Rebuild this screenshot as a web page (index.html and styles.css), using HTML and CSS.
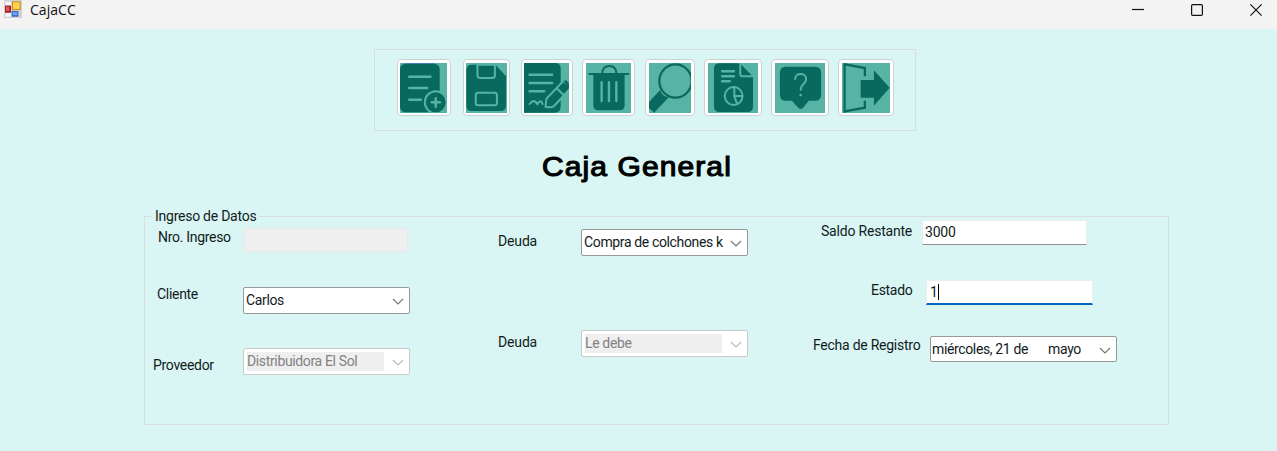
FILE: index.html
```html
<!DOCTYPE html>
<html lang="es">
<head>
<meta charset="utf-8">
<title>CajaCC</title>
<link rel="stylesheet" href="styles.css">
</head>
<body>
<header class="titlebar">
  <svg class="app-icon" viewBox="0 0 54 54">
    <rect width="54" height="54" fill="#d2d2d2"/>
    <path d="M4 5h17v10H4zM4 39h17v11H4z" fill="#f5f5f5"/>
    <rect x="24" y="4" width="26" height="26" fill="#c98b12"/><rect x="27" y="7" width="20" height="20" fill="#ffd34d"/>
    <rect x="3" y="17" width="18" height="21" fill="#a51c20"/><rect x="6" y="20" width="10" height="13" fill="#e0585a"/>
    <rect x="23" y="33" width="20" height="17" fill="#2b62c4"/><rect x="26" y="36" width="14" height="10" fill="#6ea5f7"/>
  </svg>
  <span class="app-name">CajaCC</span>
  <div class="window-controls">
    <svg viewBox="0 0 12 12"><path d="M0 5.5h12"/></svg>
    <svg viewBox="0 0 12 12"><rect x=".6" y=".6" width="10.8" height="10.8" rx="1.2"/></svg>
    <svg viewBox="0 0 12 12"><path d="M.4.4l11.2 11.2M11.6.4L.4 11.6"/></svg>
  </div>
</header>
<main class="form">
  <nav class="toolbar">
    <button class="tool tool-new" aria-label="Nuevo"><svg viewBox="0 0 142 150" preserveAspectRatio="none">
      <rect x="0" y="2" width="120" height="146" rx="16" class="solid"/><path d="M14 1h90" stroke="#3f78c8" stroke-width="3"/>
      <path d="M28 41h64M28 75h54M28 110h35" class="line"/>
      <circle cx="108" cy="118" r="33" class="solid"/><circle cx="108" cy="118" r="33" class="line thin"/><path d="M108 106v25M96 118h25" class="line"/>
    </svg></button>
    <button class="tool tool-save" aria-label="Guardar"><svg viewBox="0 0 122 150" preserveAspectRatio="none">
      <path d="M18 5h70l31 35v88q0 16-16 16H16q-15 0-15-16V22Q1 5 18 5z" class="solid"/>
      <path d="M34 5v32q0 8 8 8h36q8 0 8-8V5z" class="line thin"/><rect x="29" y="89" width="63" height="38" rx="7" class="line thin"/>
    </svg></button>
    <button class="tool tool-edit" aria-label="Editar"><svg viewBox="0 0 136 150" preserveAspectRatio="none">
      <path d="M0 0h94q17 0 17 17v112q0 20-18 20H0z" class="solid"/>
      <path d="M17 35h68M17 60h68M17 85h44" class="line"/><path d="M17 123q9-12 16-8 4 3 7 8 7-8 10-8 3 0 6 8" class="line thin"/>
      <path d="M65 131l3-24 51-53 23 20-51 55q-8 7-26 2z" class="solid edge"/><path d="M119 54l9-2 14 16-3 11z" class="solid"/><path d="M99 76l23 22" class="line thin"/>
    </svg></button>
    <button class="tool tool-delete" aria-label="Eliminar"><svg viewBox="0 0 141 150" preserveAspectRatio="none">
      <path d="M8 33h127M51 31Q52 9 73 9t22 22" fill="none" stroke="#086a5f" stroke-width="6"/>
      <path d="M23 34h98v93q0 15-15 15H38q-15 0-15-15z" class="solid"/><path d="M49 58v56M72 58v56M95 58v56" class="line"/>
    </svg></button>
    <button class="tool tool-search" aria-label="Buscar"><svg viewBox="0 0 130 150" preserveAspectRatio="none">
      <path d="M35 80q4 20 26 23L16 149 0 136v-19z" class="solid"/><circle cx="82" cy="54" r="50" fill="#57b4a5" stroke="#086a5f" stroke-width="7"/>
    </svg></button>
    <button class="tool tool-report" aria-label="Reporte"><svg viewBox="0 0 152 150" preserveAspectRatio="none">
      <path d="M33 1h64l40 40v88q0 18-16 18H34q-16 0-16-18V19Q18 1 33 1z" class="solid"/>
      <path d="M98 0v33q0 7 7 7h32" class="line thin"/><path d="M43 25h36M43 40h36M43 55h23" class="line"/>
      <circle cx="78" cy="99" r="27" class="line thin"/><path d="M80 72v29l9 22M81 99h23" class="line thin"/>
    </svg></button>
    <button class="tool tool-help" aria-label="Ayuda"><svg viewBox="0 0 154 150" preserveAspectRatio="none">
      <path d="M33 11h91q18 0 18 18v66q0 18-18 18h-20l-16 20q-9 10-18 0l-18-20H33q-18 0-18-18V29q0-18 18-18z" class="solid"/>
      <path d="M62 48c0-20 34-20 34 0 0 15-17 14-17 32" class="line thin"/><circle cx="79" cy="96" r="4" fill="#57b4a5"/>
    </svg></button>
    <button class="tool tool-exit" aria-label="Salir"><svg viewBox="0 0 149 150" preserveAspectRatio="none">
      <path d="M71 40V15L8 4v141l63-11v-21" fill="none" stroke="#086a5f" stroke-width="7"/><path d="M58 51h41V22l49 52-49 54v-24H58z" class="solid"/>
    </svg></button>
  </nav>
  <h1 class="heading"><span>Caja General</span></h1>
  <fieldset class="group">
    <legend>Ingreso de Datos</legend>
    <div class="column column-client">
      <div class="row row-number"><label>Nro. Ingreso</label><div class="box readonly"></div></div>
      <div class="row row-client"><label>Cliente</label><div class="box select"><span>Carlos</span><svg class="chevron" viewBox="0 0 12 7"><path d="M1 1l5 5 5-5"/></svg></div></div>
      <div class="row row-provider"><label>Proveedor</label><div class="box select disabled"><span>Distribuidora El Sol</span><svg class="chevron" viewBox="0 0 12 7"><path d="M1 1l5 5 5-5"/></svg></div></div>
    </div>
    <div class="column column-debt">
      <div class="row row-debt"><label>Deuda</label><div class="box select"><span>Compra de colchones k</span><svg class="chevron" viewBox="0 0 12 7"><path d="M1 1l5 5 5-5"/></svg></div></div>
      <div class="row row-owed"><label>Deuda</label><div class="box select disabled"><span>Le debe</span><svg class="chevron" viewBox="0 0 12 7"><path d="M1 1l5 5 5-5"/></svg></div></div>
    </div>
    <div class="column column-balance">
      <div class="row row-balance"><label>Saldo Restante</label><div class="box input"><span>3000</span></div></div>
      <div class="row row-state"><label>Estado</label><div class="box input focused"><span>1</span><i class="caret"></i></div></div>
      <div class="row row-date"><label>Fecha de Registro</label><div class="box select date"><span>miércoles, 21 de</span><span class="month">mayo</span><svg class="chevron" viewBox="0 0 12 7"><path d="M1 1l5 5 5-5"/></svg></div></div>
    </div>
  </fieldset>
</main>
</body>
</html>
```
FILE: styles.css
```css
* { box-sizing: border-box; }
body { margin: 0; height: 451px; overflow: hidden; background: #daf6f4; color: #111b1b; font: 14px/18px Roboto, "Liberation Sans", sans-serif; }
.titlebar { display: flex; height: 29px; padding: 0 15px 0 4px; background: #f3f3f3; }
.app-icon { width: 18px; height: 18px; }
.app-name { margin: 1px 0 0 8px; font: 14px/18px "Open Sans", sans-serif; letter-spacing: .05px; color: #111; }
.window-controls { display: flex; gap: 47px; margin: 4px 0 0 auto; }
.window-controls svg { width: 12px; height: 12px; fill: none; stroke: #111; stroke-width: 1.2; }
.form { display: flex; flex-direction: column; padding: 20px 0 0 144px; }
.toolbar { display: flex; width: 542px; height: 82px; margin-left: 230px; padding: 9px 0 0 22px; border: 1px solid #d8dedd; }
.tool { flex: none; height: 57px; padding: 3px; border: 1px solid #ccd2d1; border-radius: 4px; background: #fff; }
.tool svg { display: block; width: 100%; height: 50px; background: #57b4a5; }
.tool-new { width: 54px; margin-right: 12px; padding: 3px 3px 3px 2px; }
.tool-save { width: 47px; margin-right: 11px; padding: 3px 2px; }
.tool-edit { width: 52px; margin-right: 9px; padding: 3px 3px 3px 2px; }
.tool-delete { width: 53px; margin-right: 10px; }
.tool-search { width: 50px; margin-right: 9px; }
.tool-report { width: 58px; margin-right: 9px; }
.tool-help { width: 58px; margin-right: 9px; }
.tool-exit { width: 56px; }
.solid { fill: #086a5f; }
.edge { stroke: #57b4a5; stroke-width: 6; }
.line { fill: none; stroke: #57b4a5; stroke-width: 7.5; stroke-linecap: round; }
.thin { stroke-width: 6; }
.heading { margin: 19px 0 0 398px; font: 27px/34px "Liberation Sans", sans-serif; color: #000; -webkit-text-stroke: 1.1px #000; letter-spacing: 1px; }
.heading span { display: inline-block; transform: scaleX(1.11); transform-origin: left; }
.group { display: flex; width: 1025px; height: 218px; margin: 23px 0 0; padding: 0; border: 1px solid #d8dedd; }
.group legend { margin-left: 7px; padding: 0 3px; height: 18px; letter-spacing: -.25px; }
.column { flex: none; }
.column-client { width: 353px; padding-left: 8px; }
.column-debt { width: 315px; }
.column-balance { width: 340px; margin-top: -5px; }
.row { display: flex; align-items: flex-start; }
.row label { white-space: nowrap; letter-spacing: -.3px; }
.box { display: flex; flex: none; width: 167px; height: 27px; background: #fff; white-space: pre; overflow: hidden; }
.box span { display: block; letter-spacing: -.36px; }
.select { align-items: center; border: 1px solid #969b9a; border-radius: 2px; padding: 0 5px 2px 2px; }
.chevron { width: 12px; height: 7px; margin: 3px 0 0 auto; fill: none; stroke: #777; stroke-width: 1.2; }
.disabled { border-color: #c7cccb; color: #828282; padding: 0 5px 0 3px; }
.disabled span { width: 137px; height: 19px; background: #efefef; }
.disabled .chevron { margin-top: 1px; stroke: #bbb; }
.readonly { width: 165px; height: 24px; background: #efefef; border: 1px solid #e5ebea; border-radius: 2px; }
.input { width: 165px; height: 25px; padding: 2px 0 0 2px; border: 1px solid #e8eeed; border-bottom-color: #8c9190; }
.input span { letter-spacing: -.2px; }
.focused { width: 167px; padding: 2px 0 0 3px; border-bottom: 2px solid #0067c0; }
.caret { width: 1px; height: 16px; margin-top: 1px; background: #000; }
.row-number { height: 62px; padding-top: 3px; }
.row-number label { width: 90px; padding-left: 5px; }
.row-client { height: 61px; }
.row-client label { width: 90px; padding-left: 4px; margin-top: -2px; }
.row-provider label { width: 90px; padding-top: 8px; }
.row-debt { height: 105px; padding-top: 4px; }
.row-debt label, .row-owed label { width: 83px; padding-top: 3px; letter-spacing: -.15px; }
.row-balance { height: 60px; }
.row-balance label { width: 109px; padding: 2px 0 0 8px; letter-spacing: -.2px; }
.row-state label { width: 113px; padding: 1px 0 0 58px; }
.row-state { height: 56px; }
.row-date label { width: 117px; letter-spacing: -.25px; }
.date { width: 187px; height: 26px; padding: 0 5px 0 1px; }
.month { margin-left: 20px; }
```
